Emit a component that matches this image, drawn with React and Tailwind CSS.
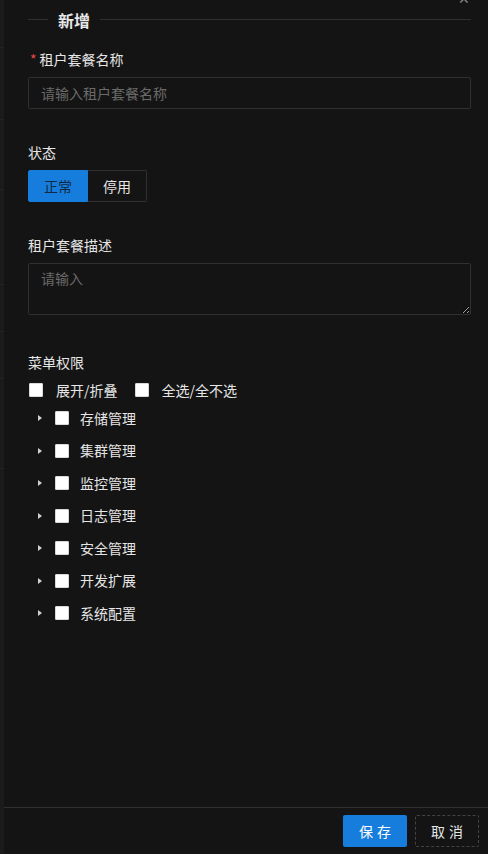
import { useState } from "react";

const menus = ["存储管理", "集群管理", "监控管理", "日志管理", "安全管理", "开发扩展", "系统配置"];

function Box() {
  return <span className="block w-[14px] h-[14px] bg-white rounded-[1px] border border-[#d9d9d9] shrink-0" />;
}

export default function App() {
  const [status, setStatus] = useState("normal");

  return (
    <div
      className="h-screen w-full flex bg-[#141414] text-[#e6e6e6] overflow-hidden"
      style={{ fontFamily: '"Noto Sans CJK SC", "Noto Sans", sans-serif' }}
    >
      {/* backdrop strip */}
      <div className="w-[4px] shrink-0 bg-[#1b1b1b] flex flex-col">
        <div className="h-[48px] border-b border-[#242424]" />
        <div className="h-[72px] border-b border-[#242424]" />
        <div className="h-[70px] border-b border-[#242424]" />
        <div className="h-[95px] border-b border-[#242424]" />
        <div className="h-[47px] border-b border-[#242424]" />
        <div className="h-[47px] border-b border-[#242424]" />
        <div className="h-[90px] border-b border-[#242424]" />
        <div className="flex-1" />
      </div>

      {/* drawer */}
      <div className="flex-1 flex flex-col relative">
        <span className="absolute right-[18px] top-[-9px] text-[#8c8c8c] text-[14px] leading-none">✕</span>

        <div className="flex-1 pl-[24px] pr-[17px]">
          {/* divider title */}
          <div className="flex items-center h-[39px]">
            <div className="w-[20px] h-px bg-[#303030]" />
            <span className="px-[10px] text-[16px] font-bold text-[#e8e8e8]">新增</span>
            <div className="flex-1 h-px bg-[#303030]" />
          </div>

          {/* name */}
          <div className="mt-[9px]">
            <div className="text-[14px] leading-[22px] flex items-center">
              <span className="text-[#e84749] mr-[3px] ml-[2px]">*</span>
              租户套餐名称
            </div>
            <div className="mt-[7px] h-[32px] border border-[#303030] rounded-[2px] flex items-center px-[12px] text-[14px] text-[#6a6a6a]">
              请输入租户套餐名称
            </div>
          </div>

          {/* status */}
          <div className="mt-[32px]">
            <div className="text-[14px] leading-[22px]">状态</div>
            <div className="mt-[7px] flex text-[14px]">
              <button
                onClick={() => setStatus("normal")}
                className={`w-[60px] h-[32px] rounded-l-[2px] border ${status === "normal" ? "bg-[#177ddc] border-[#177ddc] text-[#0f2a45]" : "border-[#303030] text-[#e6e6e6]"}`}
              >
                正常
              </button>
              <button
                onClick={() => setStatus("off")}
                className={`w-[59px] h-[32px] rounded-r-[2px] border border-l-0 ${status === "off" ? "bg-[#177ddc] border-[#177ddc] text-[#0f2a45]" : "border-[#303030] text-[#e6e6e6]"}`}
              >
                停用
              </button>
            </div>
          </div>

          {/* desc */}
          <div className="mt-[32px]">
            <div className="text-[14px] leading-[22px]">租户套餐描述</div>
            <textarea
              placeholder="请输入"
              className="mt-[7px] block w-full h-[52px] bg-transparent border border-[#303030] rounded-[2px] px-[12px] py-[4px] text-[14px] placeholder-[#6a6a6a] outline-none"
            />
          </div>

          {/* menu perms */}
          <div className="mt-[36px]">
            <div className="text-[14px] leading-[22px]">菜单权限</div>
            <div className="mt-[6px] flex items-center text-[14px] h-[22px] pl-[1px]">
              <Box />
              <span className="ml-[13px]">展开/折叠</span>
              <span className="ml-[17px]"><Box /></span>
              <span className="ml-[13px]">全选/全不选</span>
            </div>
            <div className="mt-[1px] flex flex-col">
              {menus.map((m) => (
                <div key={m} className="h-[32.5px] flex items-center text-[14px]">
                  <span className="w-[27px] flex justify-end pr-[13px]">
                    <span className="w-0 h-0 border-y-[3.5px] border-y-transparent border-l-[4px] border-l-[#d0d0d0]" />
                  </span>
                  <Box />
                  <span className="ml-[11px]">{m}</span>
                </div>
              ))}
            </div>
          </div>
        </div>

        {/* footer */}
        <div className="h-[47px] shrink-0 border-t border-[#303030] flex items-center justify-end gap-[8px] pr-[9px]">
          <button className="w-[64px] h-[32px] bg-[#177ddc] rounded-[2px] text-[14px] text-white tracking-[4px] pl-[4px]">
            保存
          </button>
          <button className="w-[64px] h-[32px] border border-dashed border-[#434343] rounded-[2px] text-[14px] text-[#e6e6e6] tracking-[4px] pl-[4px]">
            取消
          </button>
        </div>
      </div>
    </div>
  );
}
